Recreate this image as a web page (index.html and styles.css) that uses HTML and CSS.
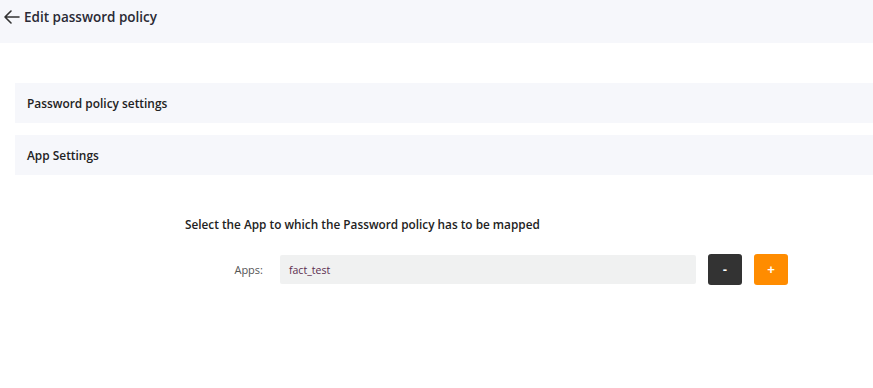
FILE: index.html
```html
<!DOCTYPE html>
<html lang="en">
<head>
  <meta charset="UTF-8" />
  <title>Edit password policy</title>
  <link rel="stylesheet" href="styles.css">
</head>
<body>
  <div class="topbar">
    <span class="back">
      <svg width="16" height="14" viewBox="0 0 16 14"><path d="M7 1 L1 7 L7 13 M1 7 H15" fill="none" stroke="#333" stroke-width="1.6" stroke-linecap="round" stroke-linejoin="round"/></svg>
    </span>
    <h1>Edit password policy</h1>
  </div>

  <div class="content">
    <div class="panel">Password policy settings</div>
    <div class="panel">App Settings</div>

    <div class="mapping">
      <h3>Select the App to which the Password policy has to be mapped</h3>
      <div class="row">
        <label>Apps:</label>
        <div class="field">fact_test</div>
        <button class="btn dark">-</button>
        <button class="btn orange">+</button>
      </div>
    </div>
  </div>
</body>
</html>
```

FILE: styles.css
```css
body { margin: 0; font-family: "Open Sans", "Noto Sans", sans-serif; color: #222; background: #fff; }
.topbar { height: 43px; background: #f6f7fb; display: flex; align-items: center; padding-left: 4px; padding-bottom: 9px; box-sizing: border-box; }
.back { display: flex; margin-right: 4px; }
.topbar h1 { font-size: 13.5px; font-weight: 600; margin: 0; color: #2a2a35; }
.content { padding: 40px 0 0 15px; }
.panel { height: 40px; background: #f6f7fb; display: flex; align-items: center; padding-left: 12px; font-size: 11.9px; font-weight: 600; color: #222; margin-bottom: 12px; }
.mapping { padding: 29px 0 0 170px; }
.mapping h3 { font-size: 11.8px; font-weight: 600; margin: 0 0 22px; color: #222; }
.row { display: flex; align-items: center; }
.row label { width: 78px; text-align: right; font-size: 11px; color: #555; margin-right: 17px; }
.field { width: 407px; height: 29px; background: #f0f1f1; border-radius: 2px; display: flex; align-items: center; padding-left: 9px; font-size: 10.5px; color: #5b2d4e; margin-right: 12px; }
.btn { width: 34px; height: 31px; border: none; border-radius: 3px; color: #fff; font-size: 13px; font-weight: 700; margin-right: 12px; padding: 0; }
.dark { background: #333; }
.orange { background: #ff8c00; }
```
